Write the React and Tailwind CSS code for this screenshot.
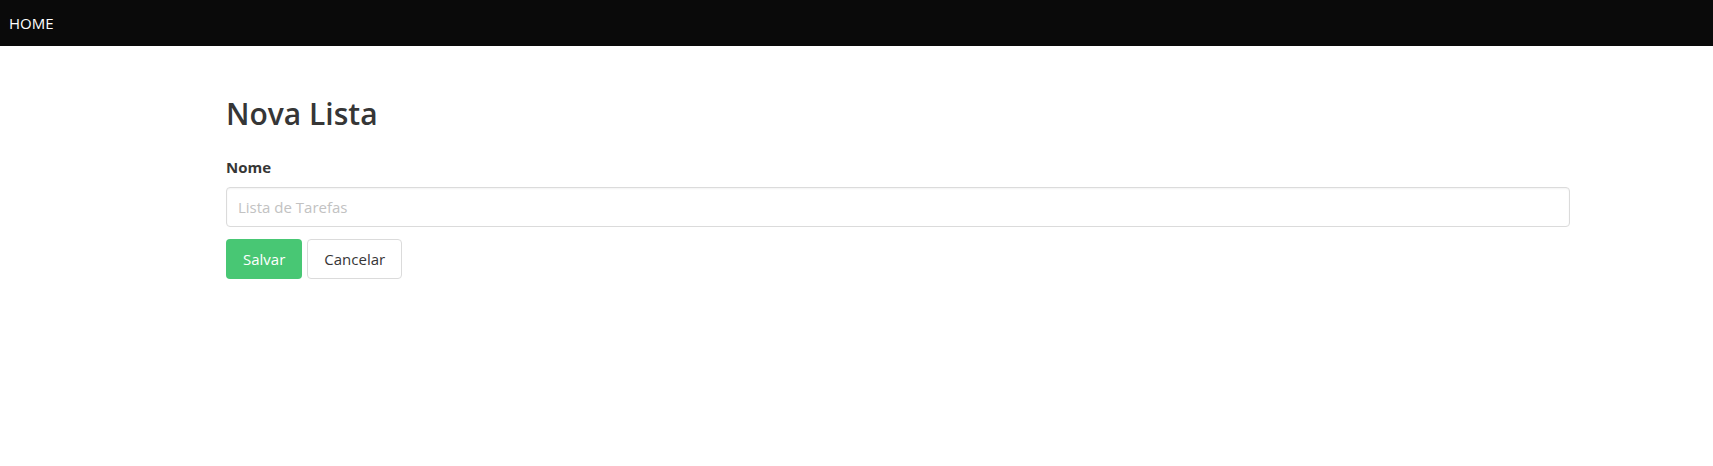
export default function App() {
  return (
    <div className="min-h-screen bg-white" style={{ fontFamily: '"Open Sans", "Noto Sans", sans-serif' }}>
      <nav className="h-[46px] bg-[#0a0a0a] flex items-center px-[9px]">
        <a href="#" className="text-white text-[15px] leading-none">HOME</a>
      </nav>

      <section className="pl-[226px] pr-[143px] pt-[50px]">
        <h1 className="text-[30px] leading-[36px] font-semibold text-[#363636]">Nova Lista</h1>

        <form className="mt-[23px]" onSubmit={(e) => e.preventDefault()}>
          <label className="block text-[15px] font-bold text-[#363636] leading-6">Nome</label>
          <input
            type="text"
            placeholder="Lista de Tarefas"
            className="mt-[8px] block w-full h-[40px] px-[11px] text-[15px] text-[#363636] placeholder:text-[#c2c2c2] border border-[#dbdbdb] rounded-[4px] shadow-[inset_0_1px_2px_rgba(10,10,10,0.05)] outline-none"
          />
          <div className="mt-[12px] flex gap-[5px]">
            <button
              type="submit"
              className="h-[40px] px-[16px] rounded-[4px] bg-[#48c774] text-white text-[15px] border border-transparent"
            >
              Salvar
            </button>
            <button
              type="button"
              className="h-[40px] px-[16px] rounded-[4px] bg-white text-[#363636] text-[15px] border border-[#dbdbdb]"
            >
              Cancelar
            </button>
          </div>
        </form>
      </section>
    </div>
  )
}
